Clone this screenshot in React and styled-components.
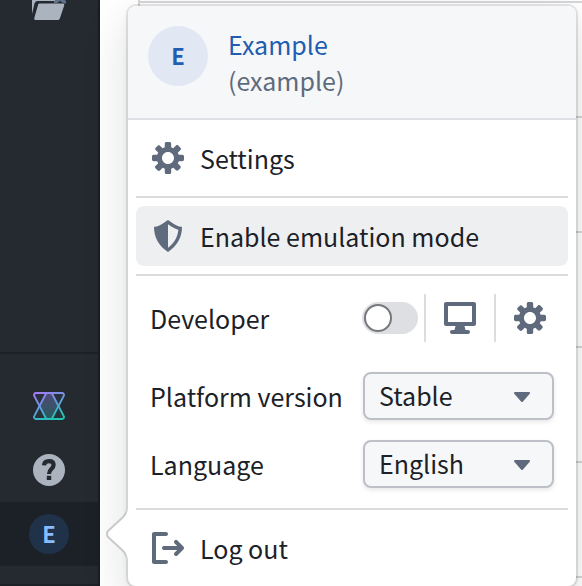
import { useState } from "react";
import styled, { createGlobalStyle } from "styled-components";

const GlobalStyle = createGlobalStyle`
  *,
  *::before {
    box-sizing: border-box;
  }

  body {
    margin: 0;
    overflow: hidden;
    background-color: #ffffff;
    color: #1c2127;
    font-family: "Noto Sans CJK SC", "Noto Sans", sans-serif;
    font-size: 25px;
    line-height: 36px;
  }

  button,
  select {
    font: inherit;
    color: inherit;
  }
`;

const Page = styled.div`
  display: flex;
  height: 100vh;
`;

const Sidebar = styled.nav`
  display: flex;
  flex-direction: column;
  width: 100px;
  background-color: #252a31;
  border-right: 2px solid #1a1d23;
  overflow: hidden;
`;

const SidebarTop = styled.div`
  flex: 1;
  margin-top: -28px;
`;

const SidebarBottom = styled.div`
  padding: 20px 0 18px;
  border-top: 2px solid #1c2127;
  border-bottom: 2px solid #1c2127;
`;

const SidebarItem = styled.button`
  display: flex;
  align-items: center;
  justify-content: center;
  width: 100%;
  height: 64px;
  padding: 0;
  border: none;
  color: #abb3bf;
  background-color: ${(props) => (props.$active ? "#1c2127" : "transparent")};
  cursor: pointer;
`;

const Avatar = styled.span`
  display: flex;
  flex-shrink: 0;
  align-items: center;
  justify-content: center;
  width: ${(props) => (props.$small ? 40 : 60)}px;
  height: ${(props) => (props.$small ? 40 : 60)}px;
  padding-bottom: 2px;
  border-radius: 50%;
  background-color: ${(props) => (props.$small ? "#203249" : "#e1e8f4")};
  color: ${(props) => (props.$small ? "#8abbff" : "#215db0")};
  font-size: 22px;
  font-weight: 700;
`;

const Content = styled.main`
  flex: 1;
  padding-left: 38px;
`;

const Grid = styled.div`
  border-left: 2px solid #d5d6d8;
`;

const GridRow = styled.div`
  height: ${(props) => (props.$first ? 3 : 115)}px;
  border-bottom: 2px solid #d5d6d8;
`;

const Popover = styled.div`
  position: absolute;
  top: 6px;
  left: 128px;
  right: 6px;
  border-radius: 8px;
  background-color: #ffffff;
  box-shadow:
    0 0 0 2px rgba(17, 20, 24, 0.1),
    0 4px 8px rgba(17, 20, 24, 0.06),
    0 16px 48px rgba(17, 20, 24, 0.14);
`;

const Arrow = styled.svg`
  position: absolute;
  left: -22px;
  bottom: 22px;
  width: 60px;
  height: 60px;
  pointer-events: none;
`;

const Header = styled.header`
  display: flex;
  gap: 20px;
  padding: 20px;
  border-bottom: 2px solid #dce0e5;
  border-radius: 8px 8px 0 0;
  background-color: #f6f7f9;
`;

const UserLink = styled.a`
  display: block;
  color: #215db0;
  text-decoration: none;
`;

const UserName = styled.div`
  color: #5f6b7c;
`;

const Menu = styled.div`
  position: relative;
  padding: 8px;
`;

const MenuItem = styled.button`
  display: flex;
  align-items: center;
  gap: 16px;
  width: 100%;
  height: 60px;
  padding: 0 16px;
  border: none;
  border-radius: 8px;
  background-color: ${(props) => (props.$active ? "#eeeff1" : "transparent")};
  text-align: left;
  cursor: pointer;
`;

const Divider = styled.hr`
  height: 2px;
  margin: 8px 0;
  border: none;
  background-color: #dbdcdd;
`;

const Options = styled.div`
  display: flex;
  flex-direction: column;
  gap: 20px;
  padding: 10px 14px 12px;
`;

const OptionRow = styled.div`
  display: flex;
  align-items: center;
  justify-content: space-between;
  height: 48px;
  margin-bottom: ${(props) => (props.$spaced ? 10 : 0)}px;
`;

const Controls = styled.div`
  display: flex;
  align-items: center;
`;

const Switch = styled.input`
  appearance: none;
  display: flex;
  align-items: center;
  width: 56px;
  height: 32px;
  margin: 0 6px 0 0;
  padding: 2px;
  border-radius: 16px;
  background-color: ${(props) => (props.checked ? "#2d72d2" : "#dedfe3")};
  cursor: pointer;

  &::before {
    content: "";
    width: 28px;
    height: 28px;
    margin-left: ${(props) => (props.checked ? 24 : 0)}px;
    border: 2px solid #76787b;
    border-radius: 50%;
    background-color: #ffffff;
  }
`;

const IconButton = styled.button`
  display: flex;
  align-items: center;
  justify-content: center;
  width: 70px;
  height: 48px;
  padding: 0 10px;
  border: none;
  border-left: 2px solid #dbdcdd;
  background-color: transparent;
  cursor: pointer;

  &:last-child {
    width: 60px;
    padding-right: 0;
  }
`;

const SelectBox = styled.div`
  position: relative;
  width: 191px;
`;

const Select = styled.select`
  appearance: none;
  display: block;
  width: 100%;
  height: 48px;
  padding: 0 52px 2px 14px;
  border: 2px solid #bdc0c6;
  border-radius: 8px;
  background-color: #f6f7f9;
  box-shadow: 0 2px 4px rgba(17, 20, 24, 0.1);
  cursor: pointer;
`;

const Caret = styled.svg`
  position: absolute;
  top: 8px;
  right: 16px;
  width: 32px;
  height: 32px;
  fill: #5f6b7c;
  pointer-events: none;
`;

const IconSvg = styled.svg`
  flex-shrink: 0;
  width: 32px;
  height: 32px;
  fill: #5f6b7c;
`;

const icons = {
  cog: "M15.19 6.39h-1.85c-.11-.37-.27-.71-.45-1.04l1.36-1.36c.31-.31.31-.82 0-1.13l-1.13-1.13c-.31-.31-.82-.31-1.13 0l-1.36 1.36c-.33-.17-.67-.33-1.04-.44V.79c0-.44-.36-.8-.8-.8h-1.6c-.44 0-.8.36-.8.8v1.86c-.39.12-.75.28-1.1.47l-1.3-1.3c-.3-.3-.79-.3-1.09 0L1.82 2.91c-.3.3-.3.79 0 1.09l1.3 1.3c-.2.34-.36.7-.48 1.09H.79c-.44 0-.8.36-.8.8v1.6c0 .44.36.8.8.8h1.85c.11.37.27.71.45 1.04l-1.36 1.36c-.31.31-.31.82 0 1.13l1.13 1.13c.31.31.82.31 1.13 0l1.36-1.36c.33.18.67.33 1.04.44v1.86c0 .44.36.8.8.8h1.6c.44 0 .8-.36.8-.8v-1.86c.39-.12.75-.28 1.1-.47l1.3 1.3c.3.3.79.3 1.09 0l1.09-1.09c.3-.3.3-.79 0-1.09l-1.3-1.3c.19-.35.36-.71.48-1.1h1.85c.44 0 .8-.36.8-.8v-1.6a.816.816 0 00-.81-.79zm-7.2 4.6c-1.66 0-3-1.34-3-3s1.34-3 3-3 3 1.34 3 3-1.34 3-3 3z",
  shield:
    "M8 16c4.667-3.048 7-7.238 7-12.571-1.556 0-3.889-1.143-7-3.429-3.111 2.286-5.444 3.429-7 3.429C1 8.762 3.333 12.952 8 16zM8 2.121c2.005 1.388 3.715 2.304 5.186 2.735-.342 3.702-2.05 6.683-5.186 9.038V2.121z",
  desktop:
    "M15 0H1C.45 0 0 .45 0 1v10c0 .55.45 1 1 1h4.75l-.5 2H4c-.55 0-1 .45-1 1s.45 1 1 1h8c.55 0 1-.45 1-1s-.45-1-1-1h-1.25l-.5-2H15c.55 0 1-.45 1-1V1c0-.55-.45-1-1-1zm-1 10H2V2h12v8z",
  logOut:
    "M7 14H2V2h5c.55 0 1-.45 1-1s-.45-1-1-1H1C.45 0 0 .45 0 1v14c0 .55.45 1 1 1h6c.55 0 1-.45 1-1s-.45-1-1-1zm8.71-6.71l-3-3a1.003 1.003 0 00-1.42 1.42L12.59 7H6c-.55 0-1 .45-1 1s.45 1 1 1h6.59l-1.29 1.29c-.19.18-.3.43-.3.71a1.003 1.003 0 001.71.71l3-3c.18-.18.29-.43.29-.71 0-.28-.11-.53-.29-.71z",
};

function Icon({ name }) {
  return (
    <IconSvg viewBox="0 0 16 16" aria-hidden="true">
      <path fillRule="evenodd" d={icons[name]} />
    </IconSvg>
  );
}

function FolderIcon() {
  return (
    <svg width="34" height="32" viewBox="0 0 34 32" aria-hidden="true">
      <path d="M0 8a2 2 0 0 1 2-2h9l4 4h9l1 3H5.500c-1.500 0-2.500 1-3 2.500L0 26z" fill="#abb3bf" />
      <path d="M28 4l2 6 4 3v2.500h-2L28 13l-3 2h-3v-2l4-3z" fill="#5f7188" />
      <path d="M7.500 15.500H31c1 0 1.500 1 1.200 2l-4.200 12.500c-.4 1.300-1 2-2 2H3.500c-1 0-1.500-1-1.200-2l3.700-13c.3-1 .8-1.500 1.500-1.500z" fill="#abb3bf" />
    </svg>
  );
}

function AssistIcon() {
  return (
    <svg width="32" height="28" viewBox="0 0 32 28" aria-hidden="true">
      <defs>
        <linearGradient id="assist" x1="8" y1="0" x2="20" y2="28" gradientUnits="userSpaceOnUse">
          <stop offset="0" stopColor="#a07df5" />
          <stop offset="0.5" stopColor="#5f9fdc" />
          <stop offset="1" stopColor="#1fc8b4" />
        </linearGradient>
        <linearGradient id="assistFill" x1="0" y1="0" x2="0" y2="1">
          <stop offset="0" stopColor="#4a4068" />
          <stop offset="1" stopColor="#25504f" />
        </linearGradient>
      </defs>
      <path d="M13 1h6l6.500 13L19 27h-6L6.500 14z" fill="url(#assistFill)" />
      <g fill="url(#assist)" fillOpacity="0.06" stroke="url(#assist)" strokeWidth="1.800" strokeLinejoin="round">
        <path d="M3 1h26c1.600 0 2.500 1.600 1.700 3L19.500 25.500c-.6 1-1.100 1.500-2 1.500h-3c-.9 0-1.400-.5-2-1.500L1.300 4C.5 2.600 1.400 1 3 1z" />
        <path d="M3 27h26c1.600 0 2.500-1.600 1.700-3L19.500 2.500c-.6-1-1.100-1.500-2-1.500h-3c-.9 0-1.400.5-2 1.500L1.300 24c-.8 1.400.1 3 1.700 3z" />
      </g>
    </svg>
  );
}

function HelpIcon() {
  return (
    <svg width="32" height="32" viewBox="0 0 16 16" aria-hidden="true">
      <circle cx="8" cy="8" r="8" fill="#abb3bf" />
      <path
        d="M5.500 5.700C5.600 4.300 6.500 3.600 8 3.600c1.500 0 2.300.8 2.300 1.900 0 1.900-2.300 2-2.300 4.500"
        fill="none"
        stroke="#252a31"
        strokeWidth="2.100"
      />
      <path d="M6.900 10.900H9.100V13H6.900z" fill="#252a31" />
    </svg>
  );
}

function PopoverArrow() {
  return (
    <Arrow viewBox="0 0 30 30" aria-hidden="true">
      <path
        d="M8.110 6.302c1.015-.936 1.887-2.922 1.887-4.297v26c0-1.378-.868-3.357-1.888-4.297L.925 17.090c-1.237-1.140-1.233-3.034 0-4.170L8.110 6.302z"
        fill="#c9cacb"
      />
      <path
        d="M8.787 7.036c1.220-1.125 2.210-3.376 2.210-5.030V0v30-2.005c0-1.654-.983-3.900-2.210-5.030l-7.183-6.616c-.810-.746-.802-1.960 0-2.700l7.183-6.614z"
        fill="#ffffff"
      />
    </Arrow>
  );
}

function SelectField({ id, options }) {
  return (
    <SelectBox>
      <Select id={id}>
        {options.map((option) => (
          <option key={option}>{option}</option>
        ))}
      </Select>
      <Caret viewBox="0 0 16 16" aria-hidden="true">
        <path d="M12 6.500c0-.28-.22-.5-.5-.5h-7a.495.495 0 00-.370.830l3.500 4c.090.100.220.170.370.170s.280-.070.370-.170l3.500-4c.080-.090.130-.200.130-.330z" />
      </Caret>
    </SelectBox>
  );
}

export default function App() {
  const [developer, setDeveloper] = useState(false);

  return (
    <>
      <GlobalStyle />
      <Page>
        <Sidebar>
          <SidebarTop>
            <SidebarItem aria-label="Files">
              <FolderIcon />
            </SidebarItem>
          </SidebarTop>
          <SidebarBottom>
            <SidebarItem aria-label="Assist">
              <AssistIcon />
            </SidebarItem>
            <SidebarItem aria-label="Help">
              <HelpIcon />
            </SidebarItem>
            <SidebarItem $active aria-label="Account">
              <Avatar $small>E</Avatar>
            </SidebarItem>
          </SidebarBottom>
        </Sidebar>
        <Content>
          <Grid>
            <GridRow $first />
            <GridRow />
            <GridRow />
            <GridRow />
            <GridRow />
            <GridRow />
          </Grid>
        </Content>
      </Page>
      <Popover>
        <PopoverArrow />
        <Header>
          <Avatar>E</Avatar>
          <div>
            <UserLink href="#account">Example</UserLink>
            <UserName>(example)</UserName>
          </div>
        </Header>
        <Menu>
          <MenuItem>
            <Icon name="cog" />
            Settings
          </MenuItem>
          <Divider />
          <MenuItem $active>
            <Icon name="shield" />
            Enable emulation mode
          </MenuItem>
          <Divider />
          <Options>
            <OptionRow $spaced>
              <label htmlFor="developer">Developer</label>
              <Controls>
                <Switch
                  id="developer"
                  type="checkbox"
                  role="switch"
                  checked={developer}
                  onChange={(e) => setDeveloper(e.target.checked)}
                />
                <IconButton aria-label="Console">
                  <Icon name="desktop" />
                </IconButton>
                <IconButton aria-label="Developer settings">
                  <Icon name="cog" />
                </IconButton>
              </Controls>
            </OptionRow>
            <OptionRow>
              <label htmlFor="version">Platform version</label>
              <SelectField id="version" options={["Stable"]} />
            </OptionRow>
            <OptionRow>
              <label htmlFor="language">Language</label>
              <SelectField id="language" options={["English"]} />
            </OptionRow>
          </Options>
          <Divider />
          <MenuItem>
            <Icon name="logOut" />
            Log out
          </MenuItem>
        </Menu>
      </Popover>
    </>
  );
}
